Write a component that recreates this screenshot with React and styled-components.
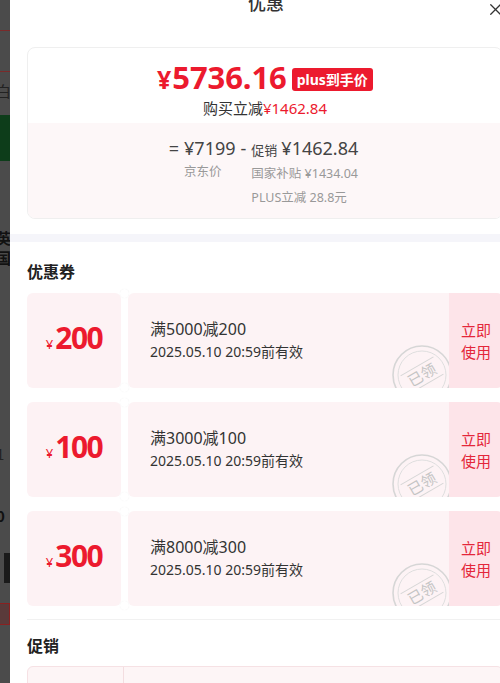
import React from "react";
import styled, { createGlobalStyle } from "styled-components";
import { X } from "lucide-react";

const GlobalStyle = createGlobalStyle`
  html, body {
    margin: 0;
    padding: 0;
    overflow: hidden;
    background: #4b4b4b;
  }
  body {
    font-family: "Noto Sans", "Noto Sans CJK SC", sans-serif;
    color: #333;
  }
`;

const RED = "#ec1a2e";

const coupons = [
  { amount: 200, rule: "满5000减200" },
  { amount: 100, rule: "满3000减100" },
  { amount: 300, rule: "满8000减300" },
];

function Stamp() {
  return (
    <StampBox viewBox="0 0 62 62" width="62" height="62">
      <circle cx="31" cy="31" r="29" fill="none" stroke="#d6d6d6" strokeWidth="1.6" />
      <circle cx="31" cy="31" r="24" fill="none" stroke="#dedede" strokeWidth="1" />
      <g transform="rotate(-30 31 31)">
        <line x1="12" y1="21" x2="50" y2="21" stroke="#d6d6d6" strokeWidth="1" />
        <line x1="12" y1="41" x2="50" y2="41" stroke="#d6d6d6" strokeWidth="1" />
        <text
          x="31"
          y="36.5"
          textAnchor="middle"
          fontSize="15"
          fill="#c4c4c4"
          fontFamily="Noto Sans CJK SC, sans-serif"
        >
          已领
        </text>
      </g>
    </StampBox>
  );
}

export default function App() {
  return (
    <>
      <GlobalStyle />
      <Screen>
        <Backdrop>
          <RedLine $top={30} />
          <RedLine $top={40} />
          <Glyph $top={10}>白</Glyph>
          <GreenBlock />
          <Glyph $top={68} $dark>英</Glyph>
          <Glyph $top={2} $dark>国</Glyph>
          <Glyph $top={178}>1</Glyph>
          <Glyph $top={44} $dark>0</Glyph>
          <BlackBlock />
          <RedBox />
        </Backdrop>

        <Sheet>
          <Header>
            <span />
            <Title>优惠</Title>
            <CloseButton>
              <X size={19} strokeWidth={1.6} color="#333" />
            </CloseButton>
          </Header>

          <PriceCard>
            <PriceTop>
              <PriceRow>
                <BigPrice>
                  <small>¥</small>5736.16
                </BigPrice>
                <PlusBadge>plus到手价</PlusBadge>
              </PriceRow>
              <SaveLine>
                购买立减<em>¥1462.84</em>
              </SaveLine>
            </PriceTop>
            <PriceBottom>
              <Formula>
                <Op>=</Op>
                <Column>
                  <Amount>¥7199</Amount>
                  <Note>京东价</Note>
                </Column>
                <Op>-</Op>
                <Column>
                  <Amount>
                    <Tag>促销</Tag>¥1462.84
                  </Amount>
                  <Note>国家补贴 ¥1434.04</Note>
                  <Note>PLUS立减 28.8元</Note>
                </Column>
              </Formula>
            </PriceBottom>
          </PriceCard>

          <Band />

          <Section>
            <SectionTitle>优惠券</SectionTitle>
            <CouponList>
              {coupons.map((c) => (
                <Coupon key={c.amount}>
                  <Stub>
                    <Value>
                      <small>¥</small>
                      {c.amount}
                    </Value>
                  </Stub>
                  <Notch $edge="top" />
                  <Notch $edge="bottom" />
                  <CouponBody>
                    <Rule>{c.rule}</Rule>
                    <Expire>2025.05.10 20:59前有效</Expire>
                    <Stamp />
                  </CouponBody>
                  <UseButton>
                    立即
                    <br />
                    使用
                  </UseButton>
                </Coupon>
              ))}
            </CouponList>
          </Section>

          <Divider />

          <Section $tight>
            <SectionTitle>促销</SectionTitle>
            <PromoCard>
              <PromoStub />
              <PromoBody />
            </PromoCard>
          </Section>
        </Sheet>
      </Screen>
    </>
  );
}

const Screen = styled.div`
  display: flex;
  align-items: flex-start;
  width: 500px;
  height: 683px;
  overflow: hidden;
`;

const Backdrop = styled.div`
  width: 10px;
  height: 683px;
  flex-shrink: 0;
  display: flex;
  flex-direction: column;
  background: #4b4b4b;
  overflow: hidden;
`;

const RedLine = styled.div`
  height: 1px;
  flex-shrink: 0;
  margin-top: ${(p) => p.$top}px;
  background: #7a2a2a;
`;

const Glyph = styled.div`
  margin-top: ${(p) => p.$top}px;
  font-size: 15px;
  line-height: 18px;
  font-weight: ${(p) => (p.$dark ? 700 : 400)};
  color: ${(p) => (p.$dark ? "#111" : "#222")};
  font-family: "Noto Sans CJK SC", sans-serif;
  text-indent: -4px;
`;

const GreenBlock = styled.div`
  height: 46px;
  flex-shrink: 0;
  margin-top: 15px;
  background: #0d3d1a;
`;

const BlackBlock = styled.div`
  height: 30px;
  flex-shrink: 0;
  margin-top: 28px;
  width: 6px;
  margin-left: 4px;
  background: #1a1a1a;
`;

const RedBox = styled.div`
  height: 20px;
  flex-shrink: 0;
  margin-top: 20px;
  border: 1px solid #8a2020;
  border-left: none;
  background: #5a3a3a;
`;

const Sheet = styled.div`
  width: 510px;
  min-height: 720px;
  flex-shrink: 0;
  margin-top: -20px;
  background: #fff;
  border-radius: 12px 12px 0 0;
  display: flex;
  flex-direction: column;
  & > * {
    flex-shrink: 0;
  }
`;

const Header = styled.div`
  height: 44px;
  display: grid;
  grid-template-columns: 1fr auto 1fr;
  align-items: center;
  padding: 0 15px 0 17px;
`;

const Title = styled.div`
  font-size: 18px;
  font-weight: 500;
  color: #333;
  font-family: "Noto Sans CJK SC", sans-serif;
`;

const CloseButton = styled.div`
  justify-self: end;
  display: flex;
  margin-top: 14px;
`;

const PriceCard = styled.div`
  margin: 23px 17px 0;
  border: 1px solid #efefef;
  border-radius: 8px;
  overflow: hidden;
`;

const PriceTop = styled.div`
  padding: 12px 0 4px;
  display: flex;
  flex-direction: column;
  align-items: center;
`;

const PriceRow = styled.div`
  height: 36px;
  display: flex;
  align-items: center;
  gap: 5px;
`;

const BigPrice = styled.div`
  color: ${RED};
  font-size: 31px;
  font-weight: 700;
  letter-spacing: -0.1px;
  line-height: 36px;
  small {
    font-size: 25px;
    margin-right: 1px;
  }
`;

const PlusBadge = styled.div`
  height: 23px;
  padding: 0 5px;
  margin-top: 2px;
  border-radius: 3px;
  background: ${RED};
  color: #fff;
  font-size: 14px;
  font-weight: 700;
  line-height: 23px;
  font-family: "Noto Sans", "Noto Sans CJK SC", sans-serif;
`;

const SaveLine = styled.div`
  margin-top: 1px;
  font-size: 15px;
  line-height: 22px;
  color: #333;
  em {
    font-style: normal;
    color: ${RED};
  }
`;

const PriceBottom = styled.div`
  background: #fdf7f8;
  padding: 13px 0 8px;
  display: flex;
  justify-content: center;
`;

const Formula = styled.div`
  display: flex;
  align-items: flex-start;
  margin-left: -8px;
`;

const Op = styled.span`
  font-size: 18px;
  line-height: 24px;
  color: #444;
  padding: 0 5px;
`;

const Column = styled.div`
  display: flex;
  flex-direction: column;
`;

const Amount = styled.div`
  font-size: 18px;
  line-height: 24px;
  color: #444;
  white-space: nowrap;
`;

const Tag = styled.span`
  font-size: 13px;
  margin-right: 4px;
`;

const Note = styled.div`
  font-size: 12.5px;
  line-height: 24px;
  color: #999;
  white-space: nowrap;
`;

const Band = styled.div`
  height: 8px;
  margin-top: 15px;
  background: #f5f5fa;
`;

const Section = styled.div`
  padding: ${(p) => (p.$tight ? "13px" : "17px")} 17px 0;
  display: flex;
  flex-direction: column;
`;

const SectionTitle = styled.div`
  font-size: 16px;
  font-weight: 700;
  line-height: 24px;
  color: #222;
  font-family: "Noto Sans CJK SC", sans-serif;
`;

const CouponList = styled.div`
  margin-top: 10px;
  display: flex;
  flex-direction: column;
  gap: 14px;
`;

const Coupon = styled.div`
  position: relative;
  height: 95px;
  display: flex;
  gap: 7px;
`;

const Stub = styled.div`
  width: 94px;
  flex-shrink: 0;
  background: #fdf2f4;
  border-radius: 6px;
  display: flex;
  align-items: center;
  justify-content: center;
`;

const Notch = styled.span`
  position: absolute;
  left: 93px;
  ${(p) => (p.$edge === "top" ? "top: -4px;" : "bottom: -4px;")}
  width: 9px;
  height: 9px;
  border-radius: 50%;
  background: #fff;
  box-shadow: 0 0 1px rgba(0, 0, 0, 0.08);
`;

const Value = styled.div`
  color: ${RED};
  font-size: 30px;
  font-weight: 700;
  letter-spacing: -1.5px;
  line-height: 36px;
  margin-left: 0;
  small {
    font-size: 13px;
    font-weight: 400;
    letter-spacing: 0;
    margin-right: 2px;
  }
`;

const CouponBody = styled.div`
  position: relative;
  flex: 1;
  overflow: hidden;
  background: #fdf3f5;
  border-radius: 6px 0 0 6px;
  padding-left: 22px;
  display: flex;
  flex-direction: column;
  justify-content: center;
`;

const Rule = styled.div`
  font-size: 16px;
  line-height: 24px;
  color: #333;
  margin-top: -2px;
`;

const Expire = styled.div`
  font-size: 14px;
  line-height: 22px;
  color: #333;
`;

const StampBox = styled.svg`
  position: absolute;
  right: -4px;
  bottom: -18px;
`;

const UseButton = styled.div`
  width: 54px;
  flex-shrink: 0;
  margin-left: -7px;
  background: #fde4e9;
  border-radius: 0 6px 6px 0;
  display: flex;
  align-items: center;
  justify-content: center;
  text-align: center;
  color: #e4263a;
  font-size: 15px;
  line-height: 22px;
  font-family: "Noto Sans CJK SC", sans-serif;
`;

const Divider = styled.div`
  height: 1px;
  margin: 13px 17px 0;
  background: #f1f1f1;
`;

const PromoCard = styled.div`
  margin-top: 9px;
  height: 95px;
  display: flex;
  border: 1px solid #f6e1e4;
  border-radius: 6px;
  background: #fdf5f6;
`;

const PromoStub = styled.div`
  width: 95px;
  border-right: 1px solid #f3dde0;
`;

const PromoBody = styled.div`
  flex: 1;
`;
